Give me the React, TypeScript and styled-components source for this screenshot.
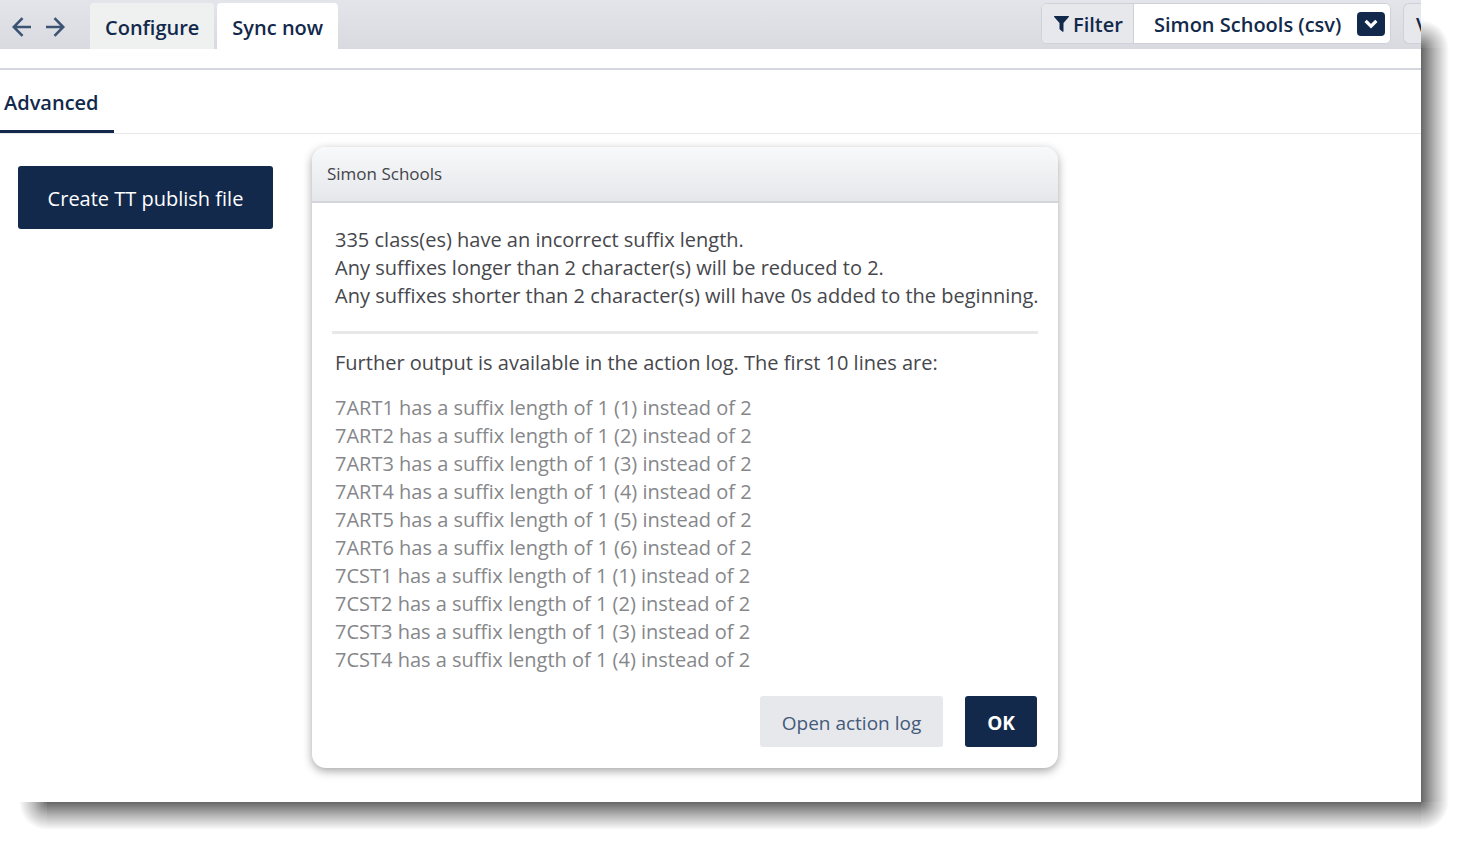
import React from "react";
import styled, { createGlobalStyle } from "styled-components";

const navy = "#12294b";
const uiFont = `"Segoe UI", "Open Sans", "Noto Sans", sans-serif`;

const GlobalStyle = createGlobalStyle`
  *, *::before, *::after { box-sizing: border-box; }
  body { margin: 0; background: #fff; font-family: ${uiFont}; }
  button, select { font-family: inherit; margin: 0; }
`;

const Page = styled.div`
  display: grid;
  grid-template-columns: minmax(0, 1fr) 48px;
  grid-template-rows: minmax(calc(100vh - 48px), auto) 48px;
  overflow: hidden;
`;

const Window = styled.div`
  min-width: 0;
  overflow: hidden;
  background: #fff;
`;

const edgeFade = "rgba(0, 0, 0, 0.6), rgba(0, 0, 0, 0.28) 14px, transparent 28px";
const cornerFade = "rgba(0, 0, 0, 0.56), rgba(0, 0, 0, 0.25) 14px, transparent 28px";

const SideShadow = styled.div`
  background:
    radial-gradient(circle at 0 100%, ${cornerFade}) 0 20px / 28px 28px no-repeat,
    linear-gradient(to right, ${edgeFade}) 0 48px / 28px 100% no-repeat;
`;

const BottomShadow = styled.div`
  background:
    radial-gradient(circle at 100% 0, ${cornerFade}) 19px 0 / 28px 28px no-repeat,
    linear-gradient(to bottom, ${edgeFade}) 47px 0 / 100% 28px no-repeat;
`;

const CornerShadow = styled.div`
  background: radial-gradient(circle at 0 0, ${cornerFade}) 0 0 / 28px 28px no-repeat;
`;

const Toolbar = styled.header`
  display: flex;
  justify-content: space-between;
  height: 49px;
  background: linear-gradient(#e4e5ea, #d9dadf);
`;

const History = styled.div`
  display: flex;
  align-items: center;
  gap: 14px;
  padding: 4px 24px 0 12px;
`;

const IconButton = styled.button`
  display: flex;
  padding: 0;
  border: 0;
  background: none;
  color: #3c5474;
`;

const ToolbarSide = styled.div`
  display: flex;
  flex: none;
`;

const Tabs = styled.nav`
  display: flex;
  gap: 3px;
  padding-top: 3px;
`;

const Tab = styled.button<{ $active?: boolean }>`
  padding: 4px 15px 0;
  border: 0;
  border-radius: 4px 4px 0 0;
  background: ${(p) => (p.$active ? "#fff" : "#eff1f1")};
  color: ${navy};
  font-size: 20px;
  font-weight: 600;
  line-height: 28px;
`;

const Filters = styled.div`
  display: flex;
  gap: 12px;
  padding-top: 3px;
  height: 44px;
`;

const FilterGroup = styled.div`
  display: flex;
  width: 350px;
  border: 1px solid #ced1da;
  border-radius: 6px;
  overflow: hidden;
  background: #fff;
`;

const FilterLabel = styled.label`
  display: flex;
  align-items: center;
  gap: 4px;
  width: 92px;
  padding: 2px 0 0 12px;
  border-right: 1px solid #ced1da;
  background: #e7e8ec;
  color: ${navy};
  font-size: 20px;
  font-weight: 600;

  svg {
    margin-bottom: 2px;
  }
`;

const SelectBox = styled.div`
  position: relative;
  display: flex;
  flex: 1;
`;

const Select = styled.select`
  appearance: none;
  width: 100%;
  padding: 2px 40px 0 20px;
  border: 0;
  background: #fff;
  color: ${navy};
  font-size: 20px;
  font-weight: 600;
`;

const Chevron = styled.span`
  position: absolute;
  top: 8px;
  right: 5px;
  display: flex;
  align-items: center;
  justify-content: center;
  width: 28px;
  height: 24px;
  border-radius: 4px;
  background: ${navy};
  pointer-events: none;
`;

const ClippedButton = styled.button`
  width: 18px;
  padding: 2px 0 0 12px;
  border: 1px solid #ced1da;
  border-right: 0;
  border-radius: 6px 0 0 6px;
  overflow: hidden;
  background: #e7e8ec;
  color: ${navy};
  font-size: 20px;
  font-weight: 600;
  text-align: left;
`;

const SubTabs = styled.nav`
  display: flex;
  height: 66px;
  margin-top: 19px;
  border-top: 2px solid #d4d7de;
  border-bottom: 1px solid #e7e7ea;
`;

const SubTab = styled.button`
  padding: 4px 15px 0 4px;
  border: 0;
  border-bottom: 3px solid ${navy};
  background: none;
  color: ${navy};
  font-size: 20px;
  font-weight: 600;
`;

const Content = styled.main`
  display: flex;
  align-items: flex-start;
  gap: 39px;
  padding: 13px 18px 32px;
`;

const Button = styled.button<{ $kind: "primary" | "quiet" | "large" }>`
  flex: none;
  min-width: ${(p) => (p.$kind === "large" ? "255px" : p.$kind === "quiet" ? "183px" : "72px")};
  height: ${(p) => (p.$kind === "large" ? "63px" : "51px")};
  margin-top: ${(p) => (p.$kind === "large" ? "19px" : "0")};
  padding: 2px 12px 0;
  border: 0;
  border-radius: 3px;
  background: ${(p) => (p.$kind === "quiet" ? "#e7e8ec" : navy)};
  color: ${(p) => (p.$kind === "quiet" ? "#435a7a" : "#fff")};
  font-size: ${(p) => (p.$kind === "large" ? "20px" : "19px")};
  font-weight: ${(p) => (p.$kind === "primary" ? 700 : 400)};
`;

const Dialog = styled.section`
  flex: 0 1 746px;
  min-width: 0;
  border-radius: 14px;
  overflow: hidden;
  background: #fff;
  box-shadow: 0 3px 10px rgba(0, 0, 0, 0.36);
`;

const DialogTitle = styled.h2`
  margin: 0;
  padding: 14px 15px;
  border-bottom: 2px solid #d3d5da;
  background: linear-gradient(#f8f9fa, #e6e7eb);
  color: #43444a;
  font-size: 17px;
  font-weight: 400;
  line-height: 26px;
`;

const DialogBody = styled.div`
  padding: 23px 20px 21px;
  color: #46474c;
  font-size: 20px;
  line-height: 28px;
`;

const Message = styled.p`
  margin: 0 0 0 3px;
`;

const WideMessage = styled(Message)`
  white-space: nowrap;
`;

const Divider = styled.hr`
  height: 3px;
  margin: 21px 0 15px;
  border: 0;
  background: #e8e8e9;
`;

const LogLines = styled.ul`
  margin: 17px 3px 22px;
  padding: 0;
  list-style: none;
  color: #86878a;
`;

const Actions = styled.div`
  display: flex;
  justify-content: flex-end;
  gap: 22px;
  padding-right: 1px;
`;

const log = [
  ["7ART1", 1],
  ["7ART2", 2],
  ["7ART3", 3],
  ["7ART4", 4],
  ["7ART5", 5],
  ["7ART6", 6],
  ["7CST1", 1],
  ["7CST2", 2],
  ["7CST3", 3],
  ["7CST4", 4],
];

function Arrow({ d }: { d: string }) {
  return (
    <svg width="20" height="20" viewBox="0 0 20 20" fill="none" stroke="currentColor" strokeWidth="2.6">
      <path d={d} />
    </svg>
  );
}

export default function App() {
  return (
    <>
      <GlobalStyle />
      <Page>
        <Window>
          <Toolbar>
            <ToolbarSide>
              <History>
                <IconButton aria-label="Back">
                  <Arrow d="M19 10H2M10.5 1.2 1.8 10l8.7 8.8" />
                </IconButton>
                <IconButton aria-label="Forward">
                  <Arrow d="M0 10h17M8.5 1.2l8.7 8.8-8.7 8.8" />
                </IconButton>
              </History>
              <Tabs>
                <Tab>Configure</Tab>
                <Tab $active>Sync now</Tab>
              </Tabs>
            </ToolbarSide>
            <Filters>
              <FilterGroup>
                <FilterLabel htmlFor="filter">
                  <svg width="15" height="16" viewBox="0 0 15 16" fill={navy}>
                    <path d="M.6 0h13.8c.6 0 .8.7.4 1.1L9.5 7v8.2c0 .6-.6.8-1 .5l-2.6-2.1a1 1 0 0 1-.4-.8V7L.2 1.1C-.2.7 0 0 .6 0Z" />
                  </svg>
                  Filter
                </FilterLabel>
                <SelectBox>
                  <Select id="filter">
                    <option>Simon Schools (csv)</option>
                  </Select>
                  <Chevron>
                    <svg width="14" height="10" viewBox="0 0 14 10" fill="none" stroke="#fff" strokeWidth="3.2">
                      <path d="M1.6 1.8 7 7.2l5.4-5.4" />
                    </svg>
                  </Chevron>
                </SelectBox>
              </FilterGroup>
              <ClippedButton>V</ClippedButton>
            </Filters>
          </Toolbar>
          <SubTabs>
            <SubTab>Advanced</SubTab>
          </SubTabs>
          <Content>
            <Button $kind="large">Create TT publish file</Button>
            <Dialog role="dialog" aria-labelledby="dialog-title">
              <DialogTitle id="dialog-title">Simon Schools</DialogTitle>
              <DialogBody>
                <Message>335 class(es) have an incorrect suffix length.</Message>
                <Message>Any suffixes longer than 2 character(s) will be reduced to 2.</Message>
                <WideMessage>Any suffixes shorter than 2 character(s) will have 0s added to the beginning.</WideMessage>
                <Divider />
                <Message>Further output is available in the action log. The first 10 lines are:</Message>
                <LogLines>
                  {log.map(([name, suffix]) => (
                    <li key={name}>{`${name} has a suffix length of 1 (${suffix}) instead of 2`}</li>
                  ))}
                </LogLines>
                <Actions>
                  <Button $kind="quiet">Open action log</Button>
                  <Button $kind="primary">OK</Button>
                </Actions>
              </DialogBody>
            </Dialog>
          </Content>
        </Window>
        <SideShadow />
        <BottomShadow />
        <CornerShadow />
      </Page>
    </>
  );
}
